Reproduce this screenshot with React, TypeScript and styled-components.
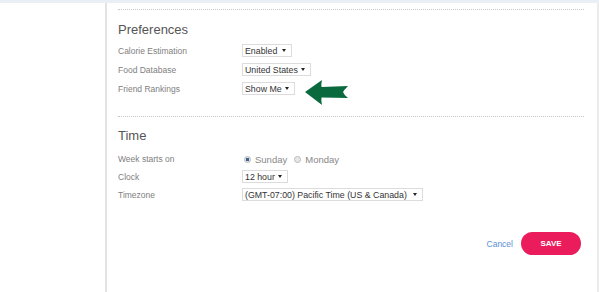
import styled, { createGlobalStyle } from "styled-components";

const GlobalStyle = createGlobalStyle`
  html, body {
    margin: 0;
    padding: 0;
    background: #fff;
    font-family: "Liberation Sans", Arial, sans-serif;
  }
`;

const Page = styled.div`
  width: 599px;
  height: 292px;
  display: flex;
  border-top: 3px solid #e9eff5;
  box-sizing: border-box;
  overflow: hidden;
`;

const Sidebar = styled.div`
  width: 105px;
  flex-shrink: 0;
`;

const Main = styled.div`
  width: 488px;
  border-left: 2px solid #e4e4e4;
  border-right: 2px solid #ececec;
  padding: 6px 13px 0 11px;
  box-sizing: content-box;
`;

const Section = styled.div<{ $pt: number }>`
  border-top: 1px dotted #c8c8c8;
  padding-top: ${(p) => p.$pt}px;
  margin-bottom: 18px;
`;

const Heading = styled.h2<{ $mb: number }>`
  margin: 0 0 ${(p) => p.$mb}px;
  font-size: 13px;
  font-weight: normal;
  color: #555;
  line-height: 18px;
`;

const Row = styled.div<{ $h?: number }>`
  display: flex;
  align-items: center;
  height: ${(p) => p.$h ?? 19}px;
`;

const Label = styled.div`
  width: 124px;
  flex-shrink: 0;
  font-size: 8.5px;
  color: #808080;
  white-space: nowrap;
`;

const Select = styled.div<{ $w: number }>`
  width: ${(p) => p.$w}px;
  height: 13px;
  flex-shrink: 0;
  box-sizing: border-box;
  border: 1px solid #dcdcdc;
  display: flex;
  align-items: center;
  justify-content: space-between;
  padding: 0 5px 0 2px;
  font-size: 8.8px;
  color: #333;
  background: #fff;
  white-space: nowrap;
  &::after {
    content: "";
    flex-shrink: 0;
    border-left: 2.5px solid transparent;
    border-right: 2.5px solid transparent;
    border-top: 3px solid #222;
  }
`;

const Radios = styled.div`
  display: flex;
  align-items: center;
  padding-left: 2px;
  gap: 7px;
  font-size: 9.5px;
  color: #888;
`;

const RadioItem = styled.span`
  display: flex;
  align-items: center;
  gap: 4px;
`;

const Dot = styled.span<{ $on?: boolean }>`
  width: 7px;
  height: 7px;
  border-radius: 50%;
  box-sizing: border-box;
  border: 1px solid #b8b8b8;
  background: ${(p) =>
    p.$on ? "radial-gradient(circle, #3b5f86 0 1.4px, #dfe6ee 2px)" : "#e8e8e8"};
`;

const Actions = styled.div`
  display: flex;
  justify-content: flex-end;
  align-items: center;
  gap: 8px;
  padding-top: 28px;
  padding-right: 3px;
`;

const Cancel = styled.span`
  font-size: 8.5px;
  color: #5b8fd6;
`;

const SaveButton = styled.button`
  width: 60px;
  height: 23px;
  border: none;
  border-radius: 12px;
  background: #ea1c5c;
  color: #fff;
  font-family: "Liberation Sans", Arial, sans-serif;
  font-weight: bold;
  font-size: 8px;
  padding: 0;
`;

const Arrow = styled.svg`
  flex-shrink: 0;
  margin-left: 10px;
  margin-top: 8px;
`;

export default function App() {
  return (
    <>
      <GlobalStyle />
      <Page>
        <Sidebar />
        <Main>
          <Section $pt={11}>
            <Heading $mb={2}>Preferences</Heading>
            <Row>
              <Label>Calorie Estimation</Label>
              <Select $w={50}>Enabled</Select>
            </Row>
            <Row>
              <Label>Food Database</Label>
              <Select $w={69}>United States</Select>
            </Row>
            <Row>
              <Label>Friend Rankings</Label>
              <Select $w={53}>Show Me</Select>
              <Arrow width="44" height="26" viewBox="0 0 44 26">
                <path
                  d="M0 12 L17 0 Q16 4 16.5 7 L43 6 Q39 10 38 12 Q39 15 43 18 L16.5 17.5 Q16 21 17 25 Z"
                  fill="#0b6a3d"
                />
              </Arrow>
            </Row>
          </Section>
          <Section $pt={10}>
            <Heading $mb={5}>Time</Heading>
            <Row $h={18}>
              <Label>Week starts on</Label>
              <Radios>
                <RadioItem>
                  <Dot $on />
                  Sunday
                </RadioItem>
                <RadioItem>
                  <Dot />
                  Monday
                </RadioItem>
              </Radios>
            </Row>
            <Row $h={17}>
              <Label>Clock</Label>
              <Select $w={46}>12 hour</Select>
            </Row>
            <Row>
              <Label>Timezone</Label>
              <Select $w={181}>(GMT-07:00) Pacific Time (US &amp; Canada)</Select>
            </Row>
            <Actions>
              <Cancel>Cancel</Cancel>
              <SaveButton>SAVE</SaveButton>
            </Actions>
          </Section>
        </Main>
      </Page>
    </>
  );
}
